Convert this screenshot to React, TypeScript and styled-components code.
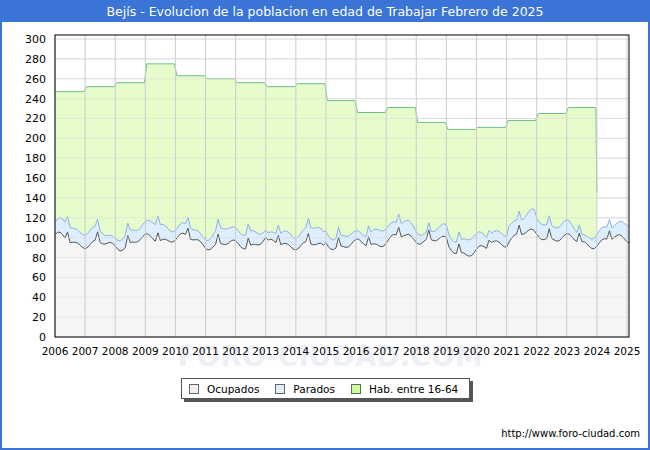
import React from "react";
import styled, { createGlobalStyle } from "styled-components";

const G = createGlobalStyle`
  body { margin: 0; font-family: "DejaVu Sans", sans-serif; }
`;
const Page = styled.div`
  width: 650px; height: 450px; box-sizing: border-box;
  border: 2px solid #3a74d6; border-top: none;
  display: flex; flex-direction: column; background: #fff; position: relative;
`;
const Title = styled.div`
  height: 22px; margin: 0 -2px; background: #3a74d6; color: #fff;
  font-size: 12.5px; display: flex; align-items: center; justify-content: center;
`;
const Legend = styled.div`
  align-self: flex-start; margin: 11px 0 0 179px; height: 21px; width: 289px; box-sizing: border-box;
  border: 1px solid #555; box-shadow: 3px 3px 0 #555; display: flex; align-items: center;
  padding: 0 7px; font-size: 10.5px; color: #000; white-space: nowrap;
`;
const Sw = styled.span<{ c: string }>`
  width: 8px; height: 8px; border: 1px solid #666; background: ${p => p.c}; margin-right: 8px;
`;
const Item = styled.span` display: flex; align-items: center; margin-right: 16px; &:last-child { margin-right: 0; } `;
const Foot = styled.div`
  margin-top: auto; margin-bottom: 9px; padding-right: 8px; text-align: right; font-size: 10px; color: #000;
`;

const X0 = 55, X1 = 627, Y0 = 337, Y300 = 39;
const xs = (t: number) => X0 + ((t - 2006) / 19) * (X1 - X0);
const ys = (v: number) => Y0 - (v / 300) * (Y0 - Y300);
const hab = [247, 252, 256, 275, 263, 260, 256, 252, 255, 238, 226, 231, 216, 209, 211, 218, 225, 231];

function noise(i: number) {
  return Math.sin(i * 0.9) * 2.5 + Math.sin(i * 0.37 + 1) * 4 + Math.sin(i * 0.13 + 2) * 4;
}
const N = 19 * 12 + 2;
const occ: number[] = [], par: number[] = [];
for (let i = 0; i < N; i++) {
  const t = i / 12;
  const base = 96 + (t > 7 && t < 9 ? -6 : 0) + (t > 13 && t < 14.5 ? -6 : 0) + (t > 15 ? 3 : 0);
  const o = base + noise(i) + (i % 12 === 5 ? 9 : 0);
  occ.push(o);
  par.push(o + 12 + Math.sin(i * 0.5) * 2 + Math.sin(i * 0.2) * 3 + (t > 15 && t < 16 ? 6 : 0));
}
const pts = (a: number[]) => a.map((v, i) => `${xs(2006 + i / 12).toFixed(1)},${ys(v).toFixed(1)}`).join(" ");
let habPath = `M${X0},${ys(hab[0])}`;
hab.forEach((v, k) => {
  habPath += ` L${xs(2006 + k) + (k ? 1.5 : 0)},${ys(v)} L${xs(2007 + k) - 1},${ys(v)}`;
});
habPath += ` L${xs(2024)},${ys(145)}`;
const habArea = habPath + ` L${xs(2024)},${Y0} L${X0},${Y0} Z`;

export default function App() {
  const years = Array.from({ length: 20 }, (_, i) => 2006 + i);
  const ticks = Array.from({ length: 16 }, (_, i) => i * 20);
  const parArea = `M${pts(par)} L${xs(2006 + (N - 1) / 12)},${Y0} L${X0},${Y0} Z`;
  const occArea = `M${pts(occ)} L${xs(2006 + (N - 1) / 12)},${Y0} L${X0},${Y0} Z`;
  return (
    <Page>
      <G />
      <Title>Bejís - Evolucion de la poblacion en edad de Trabajar Febrero de 2025</Title>
      <svg width={646} height={345} viewBox="2 22 646 345" style={{ display: "block" }}>
        <text x={330} y={366} fontSize={28} fill="#eef0f8" textAnchor="middle" fontWeight="bold">FORO-CIUDAD.COM</text>
        {ticks.map(t => <line key={t} x1={X0} x2={629} y1={ys(t)} y2={ys(t)} stroke="#ddd" />)}
        <path d={habArea} fill="#e6fccb" />
        <path d={habPath} fill="none" stroke="#6fbf8a" strokeWidth={1} />
        <path d={parArea} fill="#ddeeff" />
        <polyline points={pts(par)} fill="none" stroke="#8fb0e8" strokeWidth={1} />
        <path d={occArea} fill="#f5f5f5" />
        <polyline points={pts(occ)} fill="none" stroke="#555" strokeWidth={1} />
        {ticks.map(t => <line key={"g" + t} x1={X0} x2={629} y1={ys(t)} y2={ys(t)} stroke="#ddd" strokeOpacity={0.6} />)}
        {years.map(y => <line key={y} x1={xs(y)} x2={xs(y)} y1={35} y2={Y0} stroke="#ccc" />)}
        <rect x={X0} y={35} width={629 - X0} height={Y0 - 35} fill="none" stroke="#000" />
        {ticks.map(t => <text key={"l" + t} x={46} y={ys(t) + 4} fontSize={11} textAnchor="end" fontFamily="DejaVu Sans">{t}</text>)}
        {years.map(y => <text key={"y" + y} x={xs(y)} y={355} fontSize={10.5} textAnchor="middle" fontFamily="DejaVu Sans">{y}</text>)}
      </svg>
      <Legend>
        <Item><Sw c="#f0f0f0" />Ocupados</Item>
        <Item><Sw c="#ddeeff" />Parados</Item>
        <Item><Sw c="#ccff99" />Hab. entre 16-64</Item>
      </Legend>
      <Foot>http://www.foro-ciudad.com</Foot>
    </Page>
  );
}
